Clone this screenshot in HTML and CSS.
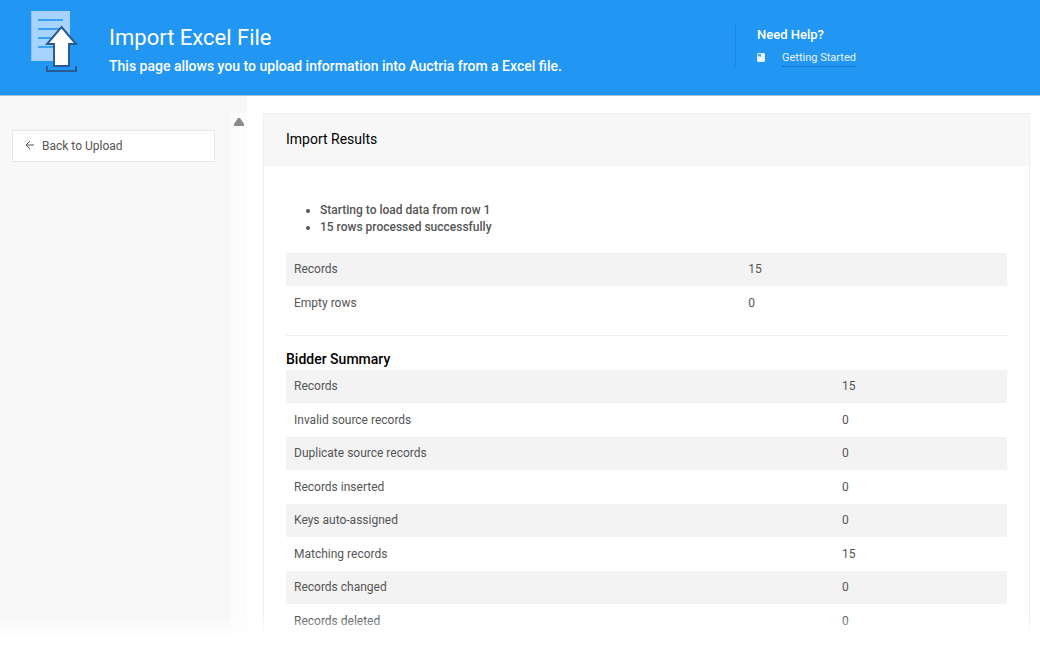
FILE: index.html
```html
<!DOCTYPE html>
<html lang="en">
  <head>
    <meta charset="UTF-8" />
    <meta name="viewport" content="width=device-width, initial-scale=1.0" />
    <title>Import Excel File</title>
    <link rel="stylesheet" href="styles.css">
  </head>
  <body>
    <header class="header">
      <svg class="headerIcon" width="48" height="64" viewBox="0 0 48 64" aria-hidden="true">
        <path d="M0 1h39v50H0z" fill="#a6d3ff" />
        <path d="M0 1h1v50H0z" fill="#8bc5fb" />
        <path d="M7 10h25M7 19h25M7 28h25M7 37h25" stroke="#3ba0f5" stroke-width="2" />
        <path d="M30.500 17L45 34h-7v22H23V34h-7z" fill="#fff" stroke="#2b5a94" stroke-width="2" />
        <path d="M16 56v5h29v-5" fill="none" stroke="#2b5a94" stroke-width="2" />
      </svg>
      <div class="headerText">
        <h1>Import Excel File</h1>
        <p>This page allows you to upload information into Auctria from a Excel file.</p>
      </div>
      <div class="help">
        <h2>Need Help?</h2>
        <div class="helpItem">
          <svg width="9" height="11" viewBox="0 0 9 11" aria-hidden="true">
            <path d="M1 0h6l1 1v7L7 9H1L0 8V1z" fill="#e8f4ff" />
            <path d="M1 1h3v3L2.500 3 1 4z" fill="#4aa8f6" />
          </svg>
          <a href="#">Getting Started</a>
        </div>
      </div>
    </header>
    <div class="page">
      <aside class="sidebar">
        <nav class="menu">
          <a class="back" href="#">
            <svg width="10" height="12" viewBox="0 0 10 12" aria-hidden="true">
              <path d="M9 5H1M5 1L1 5l4 4" fill="none" stroke="#555" />
            </svg>
            Back to Upload
          </a>
        </nav>
        <div class="track">
          <svg width="10" height="8" viewBox="0 0 10 8" aria-hidden="true">
            <path d="M4 0h2l4 6v2H0V6z" fill="#8b8b8b" />
          </svg>
        </div>
      </aside>
      <main class="content">
        <section class="panel">
          <h2 class="panelTitle">Import Results</h2>
          <div class="panelBody">
            <ul class="messages">
              <li>Starting to load data from row 1</li>
              <li>15 rows processed successfully</li>
            </ul>
            <table class="results totals">
              <tr><th scope="row">Records</th><td>15</td></tr>
              <tr><th scope="row">Empty rows</th><td>0</td></tr>
            </table>
            <hr />
            <h3>Bidder Summary</h3>
            <table class="results summary">
              <tr><th scope="row">Records</th><td>15</td></tr>
              <tr><th scope="row">Invalid source records</th><td>0</td></tr>
              <tr><th scope="row">Duplicate source records</th><td>0</td></tr>
              <tr><th scope="row">Records inserted</th><td>0</td></tr>
              <tr><th scope="row">Keys auto-assigned</th><td>0</td></tr>
              <tr><th scope="row">Matching records</th><td>15</td></tr>
              <tr><th scope="row">Records changed</th><td>0</td></tr>
              <tr><th scope="row">Records deleted</th><td>0</td></tr>
            </table>
          </div>
        </section>
      </main>
      <div class="fade"></div>
    </div>
  </body>
</html>
```
FILE: styles.css
```css
* {
  box-sizing: border-box;
}
body {
  margin: 0;
  height: 100vh;
  display: flex;
  flex-direction: column;
  overflow: hidden;
  font-family: Roboto, Arial, sans-serif;
  font-size: 12px;
  line-height: 17px;
  color: #555;
}
h1,
h2,
h3,
p {
  margin: 0;
  font-weight: 500;
}
.header {
  display: flex;
  align-items: flex-start;
  flex-shrink: 0;
  background: #2196f3;
  border-bottom: 1px solid #a9bfd4;
  color: #fff;
  padding: 10px 0 15px 31px;
}
.headerIcon {
  flex-shrink: 0;
}
.headerText {
  flex-grow: 1;
  padding: 12px 0 0 30px;
}
.headerText h1 {
  font-size: 22px;
  font-weight: 400;
  line-height: 32px;
}
.headerText p {
  font-size: 14px;
  font-weight: 500;
  line-height: 24px;
  padding-bottom: 2px;
}
.help {
  width: 305px;
  margin-top: 15px;
  padding-left: 21px;
  border-left: 1px solid #1e87db;
}
.help h2 {
  font-size: 13px;
  line-height: 20px;
}
.helpItem {
  display: flex;
  align-items: center;
  gap: 16px;
  padding-top: 4px;
}
.helpItem a {
  color: #e8f4ff;
  font-size: 11px;
  text-decoration: none;
  border-bottom: 1px dotted #1666ab;
}
.page {
  position: relative;
  flex: 1;
  display: flex;
  min-height: 0;
  overflow: hidden;
}
.sidebar {
  width: 247px;
  flex-shrink: 0;
  display: flex;
  padding-top: 17px;
  background: #f8f8f8;
}
.menu {
  flex: 1;
  padding: 17px 16px 0 12px;
}
.back {
  display: flex;
  align-items: center;
  gap: 7px;
  height: 32px;
  padding-left: 12px;
  background: #fff;
  border: 1px solid #e7e7e7;
  color: #555;
  text-decoration: none;
}
.track {
  width: 16px;
  padding-top: 5px;
  background: #fcfcfc;
}
.track svg {
  display: block;
  margin: 0 auto;
}
.content {
  flex: 1;
  padding: 17px 10px 0 16px;
}
.panel {
  border: 1px solid #eee;
}
.panelTitle {
  padding: 15px 22px 17px;
  background: #f7f7f7;
  color: #000;
  font-size: 14px;
  font-weight: 400;
  line-height: 20px;
}
.panelBody {
  padding: 36px 22px 22px;
}
.messages {
  margin: 0 0 17px;
  padding-left: 34px;
  font-weight: 500;
}
.results {
  width: 100%;
  table-layout: fixed;
  border-collapse: separate;
  border-spacing: 0;
}
.results th,
.results td {
  padding: 8px;
  font-weight: 400;
  text-align: left;
}
.results tr:nth-child(odd) {
  background: #f3f3f3;
}
.results tr:nth-child(even) > * {
  border-top: 1px solid #fff;
}
.totals th {
  width: 63%;
}
.summary th {
  width: 76%;
}
hr {
  margin: 15px 0 14px;
  border: 0;
  border-top: 1px solid #eee;
}
h3 {
  padding-bottom: 2px;
  color: #000;
  font-size: 14px;
  line-height: 18px;
}
/* content fades out at the bottom edge */
.fade {
  position: absolute;
  left: 0;
  right: 0;
  bottom: 0;
  height: 30px;
  background: linear-gradient(rgba(255, 255, 255, 0), #fff 70%);
}
```
